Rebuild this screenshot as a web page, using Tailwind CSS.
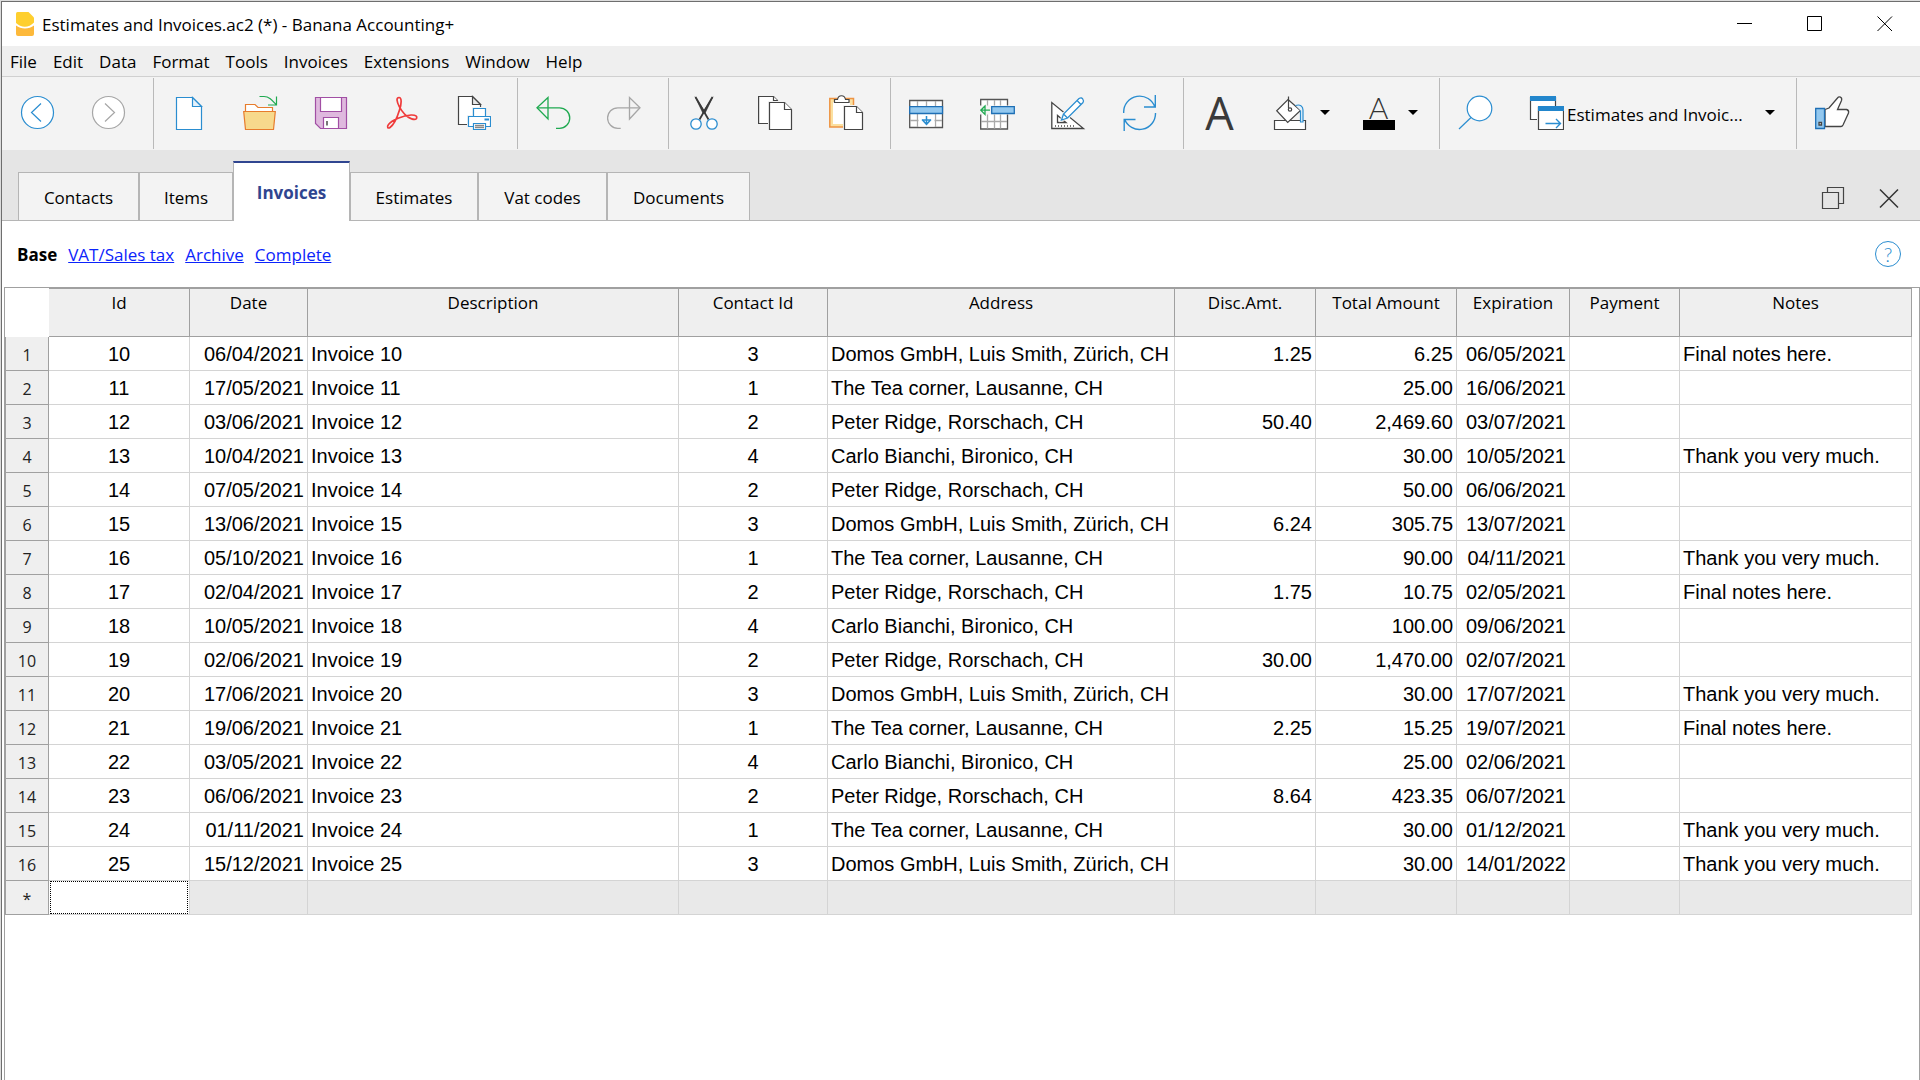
<!DOCTYPE html>
<html lang="en">
<head>
<meta charset="utf-8">
<title>Estimates and Invoices.ac2 (*) - Banana Accounting+</title>
<script src="https://cdn.jsdelivr.net/npm/@tailwindcss/browser@4"></script>
</head>
<body class="bg-[#dcdcdc] font-['Open_Sans',sans-serif] text-[17px] text-black">
<div class="flex min-h-screen flex-col pt-px pl-px">
<div class="flex flex-1 flex-col border-t border-l border-[#6e6e6e] bg-white">

<!-- Title bar -->
<header class="flex h-11 items-center pl-3.5">
  <svg class="h-6 w-[18px]" viewBox="0 0 18 24" aria-hidden="true">
    <path d="M1.500 0H12.500L18 5.500V10.500C13 16 5 16 0 11V1.500Q0 0 1.500 0Z" fill="#fecf2f"/>
    <path d="M0 13.500C5 17.500 13 17.500 18 13.500V22Q18 24 16 24H2Q0 24 0 22Z" fill="#fdb93b"/>
  </svg>
  <h1 class="ml-2 flex-1 pt-0.5 leading-6">Estimates and Invoices.ac2 (*) - Banana Accounting+</h1>
  <div class="flex">
    <button aria-label="Minimize" class="flex h-11 w-[70px] items-center justify-center"><svg class="h-4 w-4" viewBox="0 0 16 16" stroke="#000"><path d="M0 7.500H15"/></svg></button>
    <button aria-label="Maximize" class="flex h-11 w-[70px] items-center justify-center"><svg class="h-4 w-4" viewBox="0 0 16 16" stroke="#000" fill="none"><path d="M.5.5H14.500V14.500H.5Z"/></svg></button>
    <button aria-label="Close" class="flex h-11 w-[70px] items-center justify-center"><svg class="h-4 w-4" viewBox="0 0 16 16" stroke="#000" fill="none"><path d="M.5.5L15 15M15 .5L.5 15"/></svg></button>
  </div>
</header>

<!-- Menu bar -->
<nav class="flex h-[31px] items-center gap-4 border-b border-[#d0d0d0] bg-[#efefef] pt-0.5 pl-2 leading-6">
  <button>File</button><button>Edit</button><button>Data</button><button>Format</button><button>Tools</button><button>Invoices</button><button>Extensions</button><button>Window</button><button>Help</button>
</nav>

<!-- Toolbar -->
<div role="toolbar" class="flex h-[73px] bg-[#f3f3f3] py-px">
  <div class="flex border-r border-[#b9b9b9] pr-[9px]">
    <button aria-label="Back" class="flex h-[69px] w-[71px] items-center justify-center"><svg class="h-9 w-[35px]" viewBox="0 0 35 36" fill="#fff" stroke="#2a8dd0" stroke-width="1.200"><circle cx="17.500" cy="17.500" r="16"/><path fill="none" d="M21 8.500L11.500 17.500L21 26.500"/></svg></button>
    <button aria-label="Forward" class="flex h-[69px] w-[71px] items-center justify-center"><svg class="h-9 w-[35px]" viewBox="0 0 35 36" fill="#fff" stroke="#a6a6a6" stroke-width="1.200"><circle cx="17.500" cy="17.500" r="16"/><path fill="none" d="M14 8.500L23.500 17.500L14 26.500"/></svg></button>
  </div>
  <div class="flex border-r border-[#b9b9b9] pr-2">
    <button aria-label="New" class="flex h-[69px] w-[71px] items-center justify-center"><svg class="h-9 w-[35px]" viewBox="0 0 35 36" fill="#fff" stroke="#2a8dd0" stroke-width="1.200"><path d="M4.500 2.500H20.500L29.500 11.500V34.500H4.500Z"/><path fill="#e4f1fb" d="M20.500 2.500V11.500H29.500Z"/></svg></button>
    <button aria-label="Open" class="flex h-[69px] w-[71px] items-center justify-center"><svg class="h-9 w-[35px]" viewBox="0 0 35 36" fill="#fff" stroke="#e77c2c" stroke-width="1.200"><path d="M2.500 17V9.500H12L15 12.500H29.500V17"/><path fill="#f7d98c" d="M.7 16.500H32.300L30.500 34.500H2.500Z"/><path fill="none" stroke="#1fa950" d="M16.500 1.500H21C26 1.500 29 5 33 9.500M33.500 1.500V10H25"/></svg></button>
    <button aria-label="Save" class="flex h-[69px] w-[71px] items-center justify-center"><svg class="h-9 w-[35px]" viewBox="0 0 35 36" fill="#dfb9de" stroke="#a14fa4" stroke-width="1.200"><path d="M1.500 2.500H32.500V33.500H6.500L1.500 28.500Z"/><path fill="#fff" d="M6.500 2.500H27.500V16.500H6.500ZM9.500 33.500V22.500H24.500V33.500Z"/><path stroke="#777" stroke-width="2" d="M13 26V30.500"/></svg></button>
    <button aria-label="Export PDF" class="flex h-[69px] w-[71px] items-center justify-center"><svg class="h-9 w-[35px]" viewBox="0 0 35 36" fill="none" stroke="#ef3b3b" stroke-width="1.700"><path d="M14 2.500C17 2.500 16.500 9 14.500 15C12.500 21.500 8.500 30 5 32.500C3 34 1.500 32 3.500 29.500C7 25 18 20.500 26 20C31 19.800 32.500 21.500 31.500 23.500C30 25.500 24 24 19.500 19C16 15 12.500 9 12 5C12 3.500 12.500 2.500 14 2.500Z"/></svg></button>
    <button aria-label="Print" class="flex h-[69px] w-[71px] items-center justify-center"><svg class="h-9 w-[35px]" viewBox="0 0 35 36" fill="#fff" stroke="#2a8dd0" stroke-width="1.200"><path stroke="#444" d="M2.500 1.500H16.500L24.500 9.500V29.500H2.500Z"/><path stroke="#444" fill="#e8e8e8" d="M16.500 1.500V9.500H24.500Z"/><path stroke="#f3f3f3" stroke-width="3" d="M12.500 21.500H17.500V13.500H29.500V21.500H34.500V31.500H12.500Z"/><path d="M17.500 21.500V13.500H29.500V21.500M12.500 21.500H34.500V31.500H12.500Z"/><path stroke-width="2" d="M28.500 24.500H33"/><path d="M17.500 28.500H29.500V34.500H17.500Z"/><path stroke="#888" stroke-width="1.500" d="M19 30.500H28M19 32.500H28"/></svg></button>
  </div>
  <div class="flex border-r border-[#b9b9b9] pr-2">
    <button aria-label="Undo" class="flex h-[69px] w-[71px] items-center justify-center"><svg class="h-9 w-[35px]" viewBox="0 0 35 36" fill="none" stroke="#1fa950" stroke-width="1.300"><path d="M12 2.500V24L1 12.800Z"/><path d="M1 12.800H23.500A10.200 10.200 0 0 1 23.500 33.300H20"/></svg></button>
    <button aria-label="Redo" class="flex h-[69px] w-[71px] items-center justify-center"><svg class="h-9 w-[35px]" viewBox="0 0 35 36" fill="none" stroke="#a6a6a6" stroke-width="1.300"><path d="M22.500 2.500V24L33 12.800Z"/><path d="M33 12.800H10.800A10.200 10.200 0 0 0 10.800 33.300H13.700"/></svg></button>
  </div>
  <div class="flex border-r border-[#b9b9b9] pr-2">
    <button aria-label="Cut" class="flex h-[69px] w-[71px] items-center justify-center"><svg class="h-9 w-[35px]" viewBox="0 0 35 36" fill="none" stroke="#3a3a3a"><path stroke-width="1.800" d="M8.500 2L21.500 24.500M25.500 2L12.500 24.500"/><path fill="#3a3a3a" d="M8 1.700L17.500 16L16 18.500ZM26 1.700L16.500 16L18 18.500Z" stroke-width=".5"/><g fill="#fff" stroke="#2a8dd0" stroke-width="1.300"><circle cx="9" cy="29" r="5.200"/><circle cx="25" cy="29" r="5.200"/></g></svg></button>
    <button aria-label="Copy" class="flex h-[69px] w-[71px] items-center justify-center"><svg class="h-9 w-[35px]" viewBox="0 0 35 36" fill="#fff" stroke="#444" stroke-width="1.200"><path d="M.6 1.500H15.500L19.500 5.500V28.500H.6Z"/><path d="M15.500 1.500V5.500H19.500"/><path stroke="#f3f3f3" stroke-width="3" d="M11.500 7.500H26.500L33.500 14.500V34.500H11.500Z"/><path d="M11.500 7.500H26.500L33.500 14.500V34.500H11.500Z"/><path d="M26.500 7.500V14.500H33.500"/></svg></button>
    <button aria-label="Paste" class="flex h-[69px] w-[71px] items-center justify-center"><svg class="h-9 w-[35px]" viewBox="0 0 35 36" fill="#fff" stroke="#444" stroke-width="1.200"><path stroke="#ee9443" stroke-width="1.500" fill="#fbe0a0" d="M.8 3.500H24.500V32H.8Z"/><path stroke="none" d="M4 7H21V29H4Z"/><path d="M5.500 7.500V4.500H8.500C9.500-.5 15.500-.5 16.500 4.500H20V7.500Z"/><path stroke="#f3f3f3" stroke-width="3" d="M15.500 11.500H27.500L33.500 17.500V34.500H15.500Z"/><path d="M15.500 11.500H27.500L33.500 17.500V34.500H15.500Z"/><path d="M27.500 11.500V17.500H33.500"/></svg></button>
  </div>
  <div class="flex border-r border-[#b9b9b9] pr-2">
    <button aria-label="Add rows" class="flex h-[69px] w-[71px] items-center justify-center"><svg class="h-9 w-[35px]" viewBox="0 0 35 36" fill="#fff" stroke="#555" stroke-width="1.300"><path d="M.7 5.500H33.500V32.500H.7Z"/><path stroke="#aaa" d="M8.500 6V32M17.500 6V12M26.500 6V32M1 25.500H33"/><path stroke="none" d="M9.500 19H25.500V31.500H9.500Z"/><path stroke="#1e6fb5" fill="#93c8ef" d="M.7 11.700H33.500V18.500H.7Z"/><path stroke="#2a8dd0" stroke-width="1.500" fill="none" d="M17.500 21V29M13 24.500L17.500 29.300L22 24.500M13 25H22"/></svg></button>
    <button aria-label="Insert cells" class="flex h-[69px] w-[71px] items-center justify-center"><svg class="h-9 w-[35px]" viewBox="0 0 35 36" fill="#fff" stroke="#555" stroke-width="1.300"><path d="M.7 4.500H27.500V34H.7Z"/><path stroke="#aaa" d="M7.500 5V33.500M14.500 5V33.500M20.500 5V33.500M1 26.500H27"/><path stroke="none" fill="#f3f3f3" d="M0 10.500H35V19.500H0Z"/><path stroke="#1e6fb5" fill="#93c8ef" d="M11.700 11.700H34.300V18.500H11.700Z"/><path stroke="#1fa950" fill="none" d="M1 15.200H10M5 11L.8 15.200L5 19.400Z"/></svg></button>
    <button aria-label="Draw" class="flex h-[69px] w-[71px] items-center justify-center"><svg class="h-9 w-[35px]" viewBox="0 0 35 36" fill="#fff" stroke="#444" stroke-width="1.300"><path d="M.8 7.500V33.500H32.500Z"/><path d="M6.500 20.500V27.500H15Z"/><path stroke="#777" stroke-dasharray="1 2" stroke-width="2" d="M4 31H23"/><path stroke="#f3f3f3" stroke-width="3" d="M10.500 25L12.500 19L28 3.500L32 7.500L16.500 23Z"/><path stroke="#2a8dd0" d="M10.500 25L12.500 19L28 3.500Q31 2 32 4.500Q33 6 32 7.500L16.500 23ZM12.500 19L16.500 23M26 5.500L30 9.500"/></svg></button>
    <button aria-label="Recalculate" class="flex h-[69px] w-[71px] items-center justify-center"><svg class="h-9 w-[35px]" viewBox="0 0 35 36" fill="none" stroke="#2a8dd0" stroke-width="1.400"><path d="M1.700 18A16 16 0 0 1 33 12.500M33.500 18A16 16 0 0 1 2.500 24M33.300 0V12H22M2.200 36V24.500H13.500"/></svg></button>
  </div>
  <div class="flex border-r border-[#b9b9b9] pr-2">
    <button aria-label="Font" class="flex h-[69px] w-[71px] items-center justify-center text-[45px] leading-9 text-[#3a3a3a]">A</button>
    <button aria-label="Background color" class="flex h-[69px] w-[88px] items-center gap-3 pl-[18px]"><svg class="h-9 w-[35px]" viewBox="0 0 35 36" fill="#fff" stroke="#444" stroke-width="1.200"><path d="M1.500 25.500H32.500V34.500H1.500Z"/><path d="M15 4.500L27.500 15.500L14.700 27.500L3.700 15.700Z"/><circle cx="17" cy="14.500" r="1.700"/><path d="M15.500 1.500V13"/><path stroke="#2a8dd0" fill="#e4f1fb" d="M22.500 10.500C27 9 30 11 30 15V27H27.500V15.500"/></svg><svg class="h-[5px] w-2.5" viewBox="0 0 10 5"><path d="M0 0H10L5 5Z"/></svg></button>
    <button aria-label="Text color" class="flex h-[69px] w-[88px] items-center gap-3 pl-[18px]"><span class="flex h-9 w-[35px] flex-col items-center"><span class="h-[25px] font-['Lato',sans-serif] text-[30px] leading-[25px] font-light text-[#333]">A</span><span class="h-[10px] w-8 bg-black"></span></span><svg class="h-[5px] w-2.5" viewBox="0 0 10 5"><path d="M0 0H10L5 5Z"/></svg></button>
  </div>
  <div class="flex border-r border-[#b9b9b9] pr-[21px]">
    <button aria-label="Find" class="flex h-[69px] w-[71px] items-center justify-center"><svg class="h-9 w-[35px]" viewBox="0 0 35 36" fill="#fff" stroke="#2a8dd0" stroke-width="1.200"><circle cx="21.500" cy="13.500" r="12.300"/><path d="M13 22.500L1 34"/></svg></button>
    <label class="flex h-[69px] w-[264px] items-center pl-[18px]">
      <svg class="h-9 w-[35px] shrink-0" viewBox="0 0 35 36" fill="#fff" stroke="#444" stroke-width="1.200" role="img" aria-label="Switch window"><path d="M1.500 2.500H26.500V24.500H1.500Z"/><path stroke="none" fill="#2286cc" d="M1 1H27V6H1Z"/><path stroke="#f3f3f3" stroke-width="3" d="M9.500 12.500H34.500V34.500H9.500Z"/><path d="M9.500 12.500H34.500V34.500H9.500Z"/><path stroke="none" fill="#2286cc" d="M9 11H35V16H9Z"/><path stroke="#2a8dd0" stroke-width="1.400" fill="none" d="M16.500 28.500H31.500M27 24L31.500 28.500L27 33"/></svg>
      <select class="ml-[3px] min-w-0 flex-1 appearance-none bg-transparent pt-1 leading-6"><option>Estimates and Invoic...</option></select>
      <svg class="h-[5px] w-2.5 shrink-0" viewBox="0 0 10 5"><path d="M0 0H10L5 5Z"/></svg>
    </label>
  </div>
  <button aria-label="Feedback" class="flex h-[69px] w-[71px] items-center justify-center"><svg class="h-9 w-[35px]" viewBox="0 0 35 36" fill="#fff" stroke="#444" stroke-width="1.300"><path d="M10 14.500L14 13L22.500 3C24 1 27.500 2 26.500 5.500L22.500 14.500H31.500C33.500 15 34 16 33.500 18L28 30C27.500 31 27 31.500 26 31.500H10Z"/><path stroke="#1e6fb5" fill="#93c8ef" d="M.7 13.500H9.500V33.500H.7Z"/><path d="M4 27.500H6.500V30H4Z"/></svg></button>
</div>

<!-- Table tabs -->
<div class="flex h-[71px] items-end border-b border-[#b5b5b5] bg-[#e5e5e5] pl-4">
  <div role="tablist" class="flex flex-1 items-end">
    <button role="tab" class="h-12 w-[121px] border border-b-0 border-[#b5b5b5] bg-[#f3f3f3] pt-0.5">Contacts</button>
    <button role="tab" class="h-12 w-[94px] border border-b-0 border-[#b5b5b5] bg-[#f3f3f3] pt-0.5">Items</button>
    <button role="tab" aria-selected="true" class="-mb-px h-[60px] w-[117px] border-x border-t-2 border-x-[#b5b5b5] border-t-[#2f4590] bg-white pt-0.5 font-bold text-[#2f4590]">Invoices</button>
    <button role="tab" class="h-12 w-[128px] border border-b-0 border-[#b5b5b5] bg-[#f3f3f3] pt-0.5">Estimates</button>
    <button role="tab" class="h-12 w-[129px] border border-b-0 border-[#b5b5b5] bg-[#f3f3f3] pt-0.5">Vat codes</button>
    <button role="tab" class="h-12 w-[143px] border border-b-0 border-[#b5b5b5] bg-[#f3f3f3] pt-0.5">Documents</button>
  </div>
  <div class="flex gap-8 pr-[19px] pb-2.5">
    <button aria-label="Restore window"><svg class="h-6 w-6" viewBox="0 0 24 24" fill="none" stroke="#444" stroke-width="1.200"><path d="M6.500 6V1.500H22.500V17.500H18M1.500 6.500H17.500V22.500H1.500Z"/></svg></button>
    <button aria-label="Close table"><svg class="h-6 w-6" viewBox="0 0 24 24" fill="none" stroke="#333" stroke-width="1.500"><path d="M3 3.500L21 21.500M21 3.500L3 21.500"/></svg></button>
  </div>
</div>

<!-- Views -->
<div class="flex h-[66px] items-start gap-[11px] pt-[22px] pr-[19px] pl-[15px] leading-6">
  <strong>Base</strong>
  <a href="#vat" class="text-[#0b24fb] underline">VAT/Sales tax</a>
  <a href="#archive" class="text-[#0b24fb] underline">Archive</a>
  <a href="#complete" class="flex-1 text-[#0b24fb]"><span class="underline">Complete</span></a>
  <button aria-label="Help" class="-mt-0.5 flex h-[26px] w-[26px] items-center justify-center rounded-full border border-[#2a8dd0] font-['Lato',sans-serif] text-xl leading-none font-light text-[#2a8dd0]">?</button>
</div>

<!-- Data table -->
<main class="ml-0.5 flex-1 border border-b-0 border-[#a0a0a0] pr-[7px]">
  <table class="w-full table-fixed border-separate border-spacing-0 font-['Liberation_Sans',Arial,sans-serif] text-[20px] leading-6">
    <colgroup><col class="w-[44px]"><col class="w-[141px]"><col class="w-[118px]"><col class="w-[371px]"><col class="w-[149px]"><col class="w-[347px]"><col class="w-[141px]"><col class="w-[141px]"><col class="w-[113px]"><col class="w-[110px]"><col></colgroup>
    <thead id="head"></thead>
    <tbody id="rows"></tbody>
  </table>
</main>
</div>
</div>
<script>
const columns = ['Id', 'Date', 'Description', 'Contact Id', 'Address', 'Disc.Amt.', 'Total Amount', 'Expiration', 'Payment', 'Notes'];
const align = ['text-center', 'text-right', 'text-left', 'text-center', 'text-left', 'text-right', 'text-right', 'text-right', 'text-left', 'text-left'];
const contacts = { 1: 'The Tea corner, Lausanne, CH', 2: 'Peter Ridge, Rorschach, CH', 3: 'Domos GmbH, Luis Smith, Zürich, CH', 4: 'Carlo Bianchi, Bironico, CH' };
const final = 'Final notes here.', thanks = 'Thank you very much.';
const invoices = [
  ['06/04/2021', 3, '1.25', '6.25', '06/05/2021', final],
  ['17/05/2021', 1, '', '25.00', '16/06/2021', ''],
  ['03/06/2021', 2, '50.40', '2,469.60', '03/07/2021', ''],
  ['10/04/2021', 4, '', '30.00', '10/05/2021', thanks],
  ['07/05/2021', 2, '', '50.00', '06/06/2021', ''],
  ['13/06/2021', 3, '6.24', '305.75', '13/07/2021', ''],
  ['05/10/2021', 1, '', '90.00', '04/11/2021', thanks],
  ['02/04/2021', 2, '1.75', '10.75', '02/05/2021', final],
  ['10/05/2021', 4, '', '100.00', '09/06/2021', ''],
  ['02/06/2021', 2, '30.00', '1,470.00', '02/07/2021', ''],
  ['17/06/2021', 3, '', '30.00', '17/07/2021', thanks],
  ['19/06/2021', 1, '2.25', '15.25', '19/07/2021', final],
  ['03/05/2021', 4, '', '25.00', '02/06/2021', ''],
  ['06/06/2021', 2, '8.64', '423.35', '06/07/2021', ''],
  ['01/11/2021', 1, '', '30.00', '01/12/2021', thanks],
  ['15/12/2021', 3, '', '30.00', '14/01/2022', thanks]
];
const rowHead = n => `<th scope="row" class="h-[34px] border-r border-b border-l border-[#a0a0a0] bg-[#efefef] p-0 pt-0.5 font-['Open_Sans',sans-serif] text-base leading-6 font-normal text-[#222]">${n}</th>`;
document.getElementById('head').innerHTML = '<tr><td class="h-[49px] bg-white p-0"></td>' + columns.map(c =>
  `<th scope="col" class="h-[49px] border-t border-r border-b border-[#a0a0a0] bg-[#efefef] p-0 pt-0.5 align-top font-['Open_Sans',sans-serif] text-[17px] leading-6 font-normal">${c}</th>`).join('') + '</tr>';
document.getElementById('rows').innerHTML = invoices.map(([date, contact, disc, total, exp, note], i) => {
  const cells = [10 + i, date, 'Invoice ' + (10 + i), contact, contacts[contact], disc, total, exp, '', note];
  return '<tr>' + rowHead(i + 1) + cells.map((v, c) =>
    `<td class="h-[34px] border-r border-b border-[#d4d4d4] px-[3px] py-0 whitespace-nowrap ${align[c]}">${v}</td>`).join('') + '</tr>';
}).join('') + '<tr>' + rowHead('*') +
  '<td class="h-[34px] border-r border-b border-[#d4d4d4] p-0 px-px"><input aria-label="New invoice id" class="block h-[33px] w-full border border-dotted border-black bg-white text-center outline-none"></td>' +
  '<td class="h-[34px] border-r border-b border-[#d4d4d4] bg-[#e9e9e9] p-0"></td>'.repeat(9) + '</tr>';
</script>
</body>
</html>
